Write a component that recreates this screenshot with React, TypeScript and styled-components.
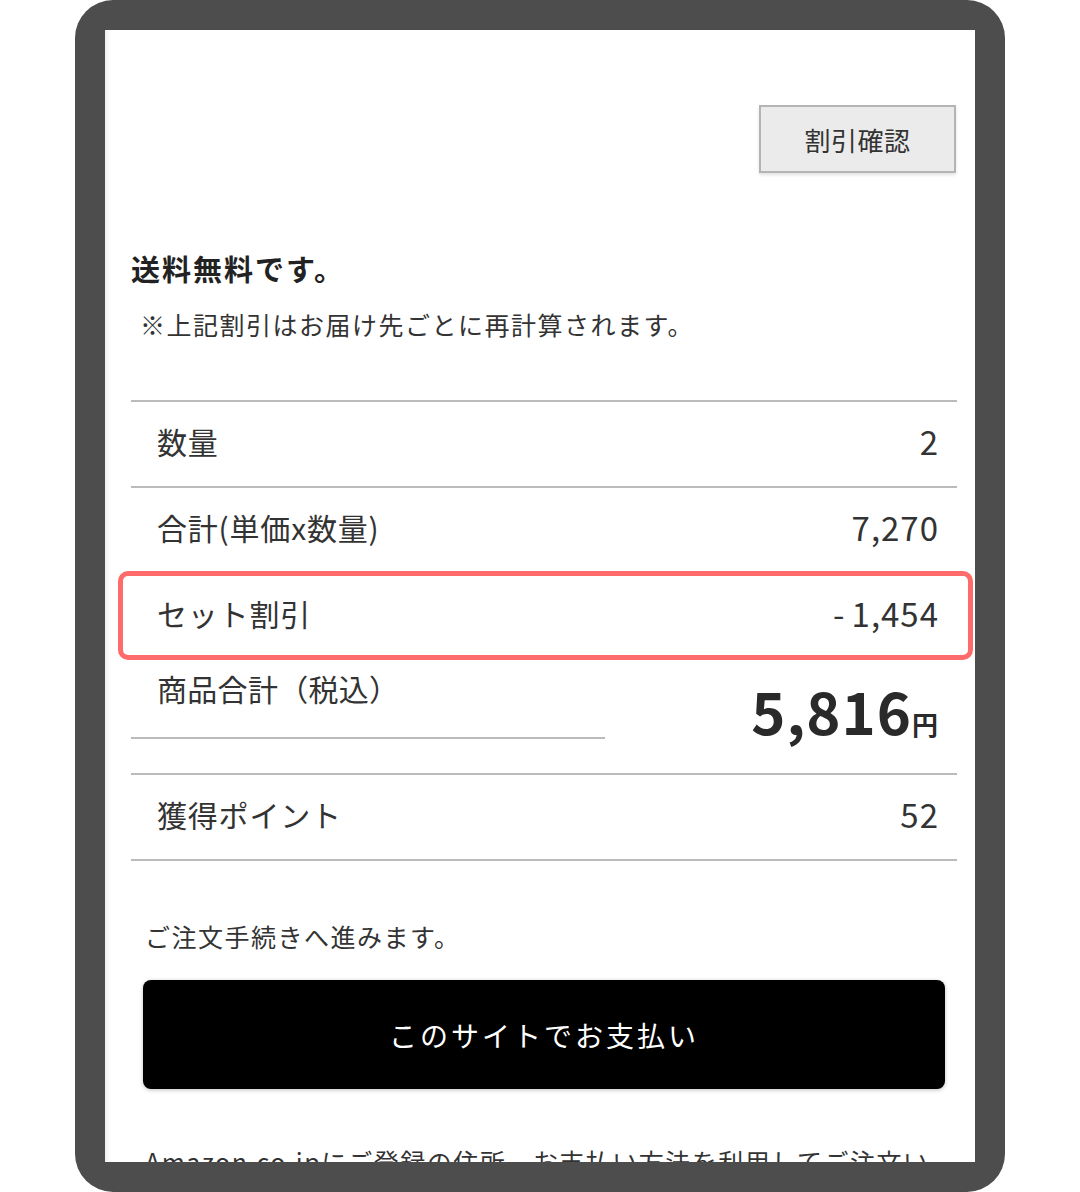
import styled, { createGlobalStyle } from "styled-components";

const GlobalStyle = createGlobalStyle`
  html, body {
    margin: 0;
    padding: 0;
    background: #ffffff;
  }
  body {
    font-family: "Noto Sans CJK JP", "Noto Sans", sans-serif;
    color: #333333;
  }
`

type Row = { label: string; value: string; highlight?: boolean };

const rows: Row[] = [
    {label: '数量', value: '2'},
    {label: '合計(単価x数量)', value: '7,270'},
    {label: 'セット割引', value: '-1,454', highlight: true},
];

const App = () => {
    return (
        <>
            <GlobalStyle/>
            <Frame>
                <Screen>
                    <TopBar>
                        <CheckButton>割引確認</CheckButton>
                    </TopBar>
                    <FreeShipping>送料無料です。</FreeShipping>
                    <Note>※上記割引はお届け先ごとに再計算されます。</Note>
                    <Table>
                        {rows.map(row => (
                            <TableRow key={row.label}>
                                <Label>{row.label}</Label>
                                <Value>
                                    {row.value.startsWith('-')
                                        ? <><Minus>-</Minus>{row.value.slice(1)}</>
                                        : row.value}
                                </Value>
                                {row.highlight && <Highlight/>}
                            </TableRow>
                        ))}
                        <TotalRow>
                            <TotalLabel>商品合計（税込）</TotalLabel>
                            <TotalValue>
                                <Amount>5,816</Amount>
                                <Yen>円</Yen>
                            </TotalValue>
                        </TotalRow>
                        <TableRow>
                            <Label>獲得ポイント</Label>
                            <Value>52</Value>
                        </TableRow>
                    </Table>
                    <Proceed>ご注文手続きへ進みます。</Proceed>
                    <PayButton>このサイトでお支払い</PayButton>
                    <Footnote>Amazon.co.jpにご登録の住所、お支払い方法を利用してご注文いただけます。</Footnote>
                </Screen>
            </Frame>
        </>
    );
}

const Frame = styled.div`
  width: 930px;
  height: 1192px;
  margin: 0 auto;
  box-sizing: border-box;
  padding: 30px;
  background: #4d4d4d;
  border-radius: 38px;
`

const Screen = styled.div`
  height: 100%;
  background: #ffffff;
  overflow: hidden;
  box-sizing: border-box;
  padding: 0 18px 0 26px;
  box-shadow: inset 5px 0 5px -3px rgba(0, 0, 0, 0.08);
`

const TopBar = styled.div`
  display: flex;
  justify-content: flex-end;
  padding-top: 75px;
`

const CheckButton = styled.button`
  width: 197px;
  height: 68px;
  margin-right: 1px;
  background: #ebebeb;
  border: 2px solid #b4b4b4;
  box-shadow: 0 2px 3px rgba(0, 0, 0, 0.12);
  font-family: inherit;
  font-size: 26px;
  letter-spacing: 0.5px;
  color: #333333;
  padding: 0;
`

const FreeShipping = styled.h2`
  margin: 75px 0 0;
  font-size: 29px;
  line-height: 40px;
  font-weight: 700;
  letter-spacing: 2px;
  color: #222222;
`

const Note = styled.p`
  margin: 19px 0 0 9px;
  font-size: 25px;
  line-height: 34px;
  letter-spacing: 1.5px;
  color: #333333;
`

const Table = styled.div`
  margin-top: 59px;
  border-top: 2px solid #bbbbbb;
`

const TableRow = styled.div`
  position: relative;
  display: flex;
  align-items: center;
  justify-content: space-between;
  height: 78px;
  padding: 0 19px 6px 26px;
  border-bottom: 2px solid #bbbbbb;
`

const Label = styled.span`
  font-size: 30px;
  letter-spacing: 0.8px;
  color: #333333;
`

const Value = styled.span`
  font-size: 33px;
  letter-spacing: 1px;
  margin-right: -1px;
  color: #333333;
`

const Minus = styled.span`
  margin-right: 6px;
`

const Highlight = styled.div`
  position: absolute;
  top: -3px;
  left: -13px;
  right: -16px;
  bottom: -2px;
  border: 5px solid #ff6b6b;
  border-radius: 10px;
  pointer-events: none;
`

const TotalRow = styled.div`
  display: flex;
  align-items: stretch;
  height: 113px;
  border-bottom: 2px solid #bbbbbb;
`

const TotalLabel = styled.div`
  width: 474px;
  height: 79px;
  box-sizing: border-box;
  padding: 8px 0 0 26px;
  font-size: 30px;
  line-height: 40px;
  letter-spacing: 0.3px;
  border-bottom: 2px solid #bbbbbb;
`

const TotalValue = styled.div`
  flex: 1;
  display: flex;
  align-items: baseline;
  justify-content: flex-end;
  padding: 18px 19px 0 0;
  color: #2a2a2a;
`

const Amount = styled.span`
  font-size: 58px;
  line-height: 64px;
  font-weight: 700;
  letter-spacing: 1px;
`

const Yen = styled.span`
  font-size: 26px;
  font-weight: 700;
`

const Proceed = styled.p`
  margin: 57px 0 0 14px;
  font-size: 25px;
  line-height: 36px;
  letter-spacing: 1.5px;
`

const PayButton = styled.button`
  display: block;
  width: calc(100% - 24px);
  height: 109px;
  margin: 26px 12px 0;
  background: #000000;
  color: #ffffff;
  border: none;
  border-radius: 8px;
  box-shadow: 0 1px 4px rgba(0, 0, 0, 0.25);
  font-family: inherit;
  font-size: 28px;
  letter-spacing: 3px;
`

const Footnote = styled.p`
  margin: 54px 12px 0 14px;
  font-size: 25px;
  line-height: 36px;
  letter-spacing: 1.5px;
`

export default App
